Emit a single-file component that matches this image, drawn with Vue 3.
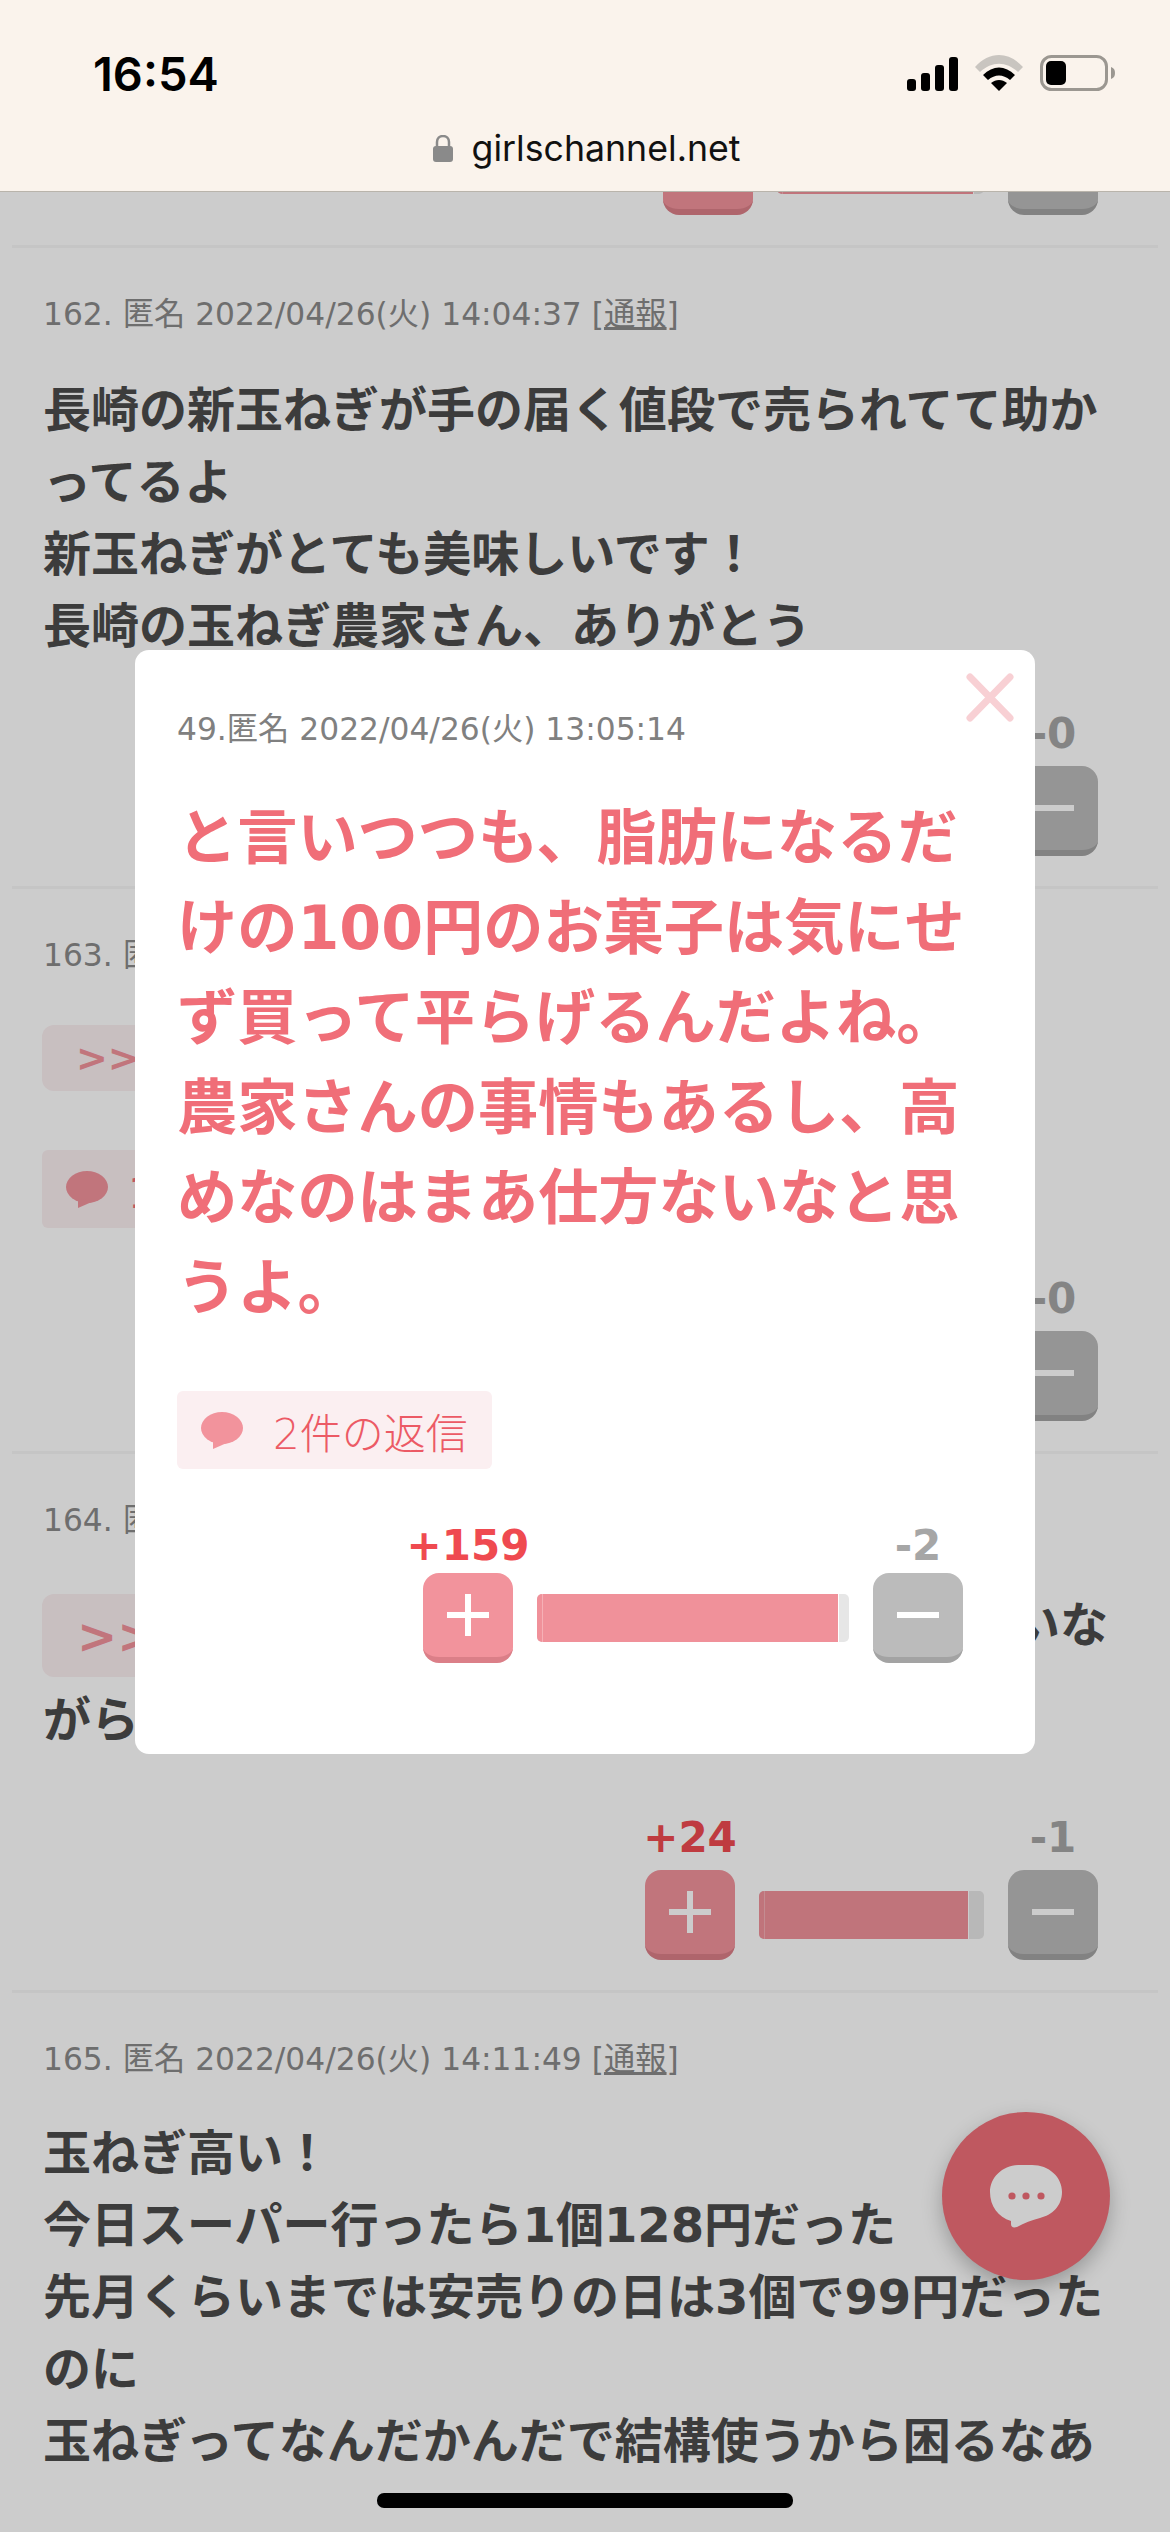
<script setup>
const posts = [
  {
    no: 162,
    time: '14:04:37',
    lines: ['長崎の新玉ねぎが手の届く値段で売られてて助か', 'ってるよ', '新玉ねぎがとても美味しいです！', '長崎の玉ねぎ農家さん、ありがとう'],
    plus: 12,
    minus: 0,
    fill: 100
  },
  {
    no: 163,
    time: '14:05:02',
    anchor: '>>49',
    replies: '1件の返信',
    lines: [],
    plus: 8,
    minus: 0,
    fill: 100
  },
  {
    no: 164,
    time: '14:08:21',
    bigAnchor: '>>49',
    leadText: 'いな',
    lines: ['がら'],
    plus: 24,
    minus: 1,
    fill: 93.5
  },
  {
    no: 165,
    time: '14:11:49',
    lines: ['玉ねぎ高い！', '今日スーパー行ったら1個128円だった', '先月くらいまでは安売りの日は3個で99円だった', 'のに', '玉ねぎってなんだかんだで結構使うから困るなあ'],
    tail: true
  }
]

const modalLines = [
  'と言いつつも、脂肪になるだ',
  'けの100円のお菓子は気にせ',
  'ず買って平らげるんだよね。',
  '農家さんの事情もあるし、高',
  'めなのはまあ仕方ないなと思',
  'うよ。'
]
</script>

<template>
  <div class="phone">
    <header class="topbar">
      <div class="status">
        <span class="clock">16:54</span>
        <div class="status-icons">
          <svg width="51" height="34" viewBox="0 0 51 34" fill="#000">
            <rect x="0" y="22" width="9" height="12" rx="3" />
            <rect x="14" y="16" width="9" height="18" rx="3" />
            <rect x="28" y="8" width="9" height="26" rx="3" />
            <rect x="42" y="0" width="9" height="34" rx="3" />
          </svg>
          <svg width="48" height="36" viewBox="0 0 48 36">
            <path d="M0 12C14-4 34-4 48 12L43 17C31 6 17 6 5 17Z" fill="#c9c5c0" />
            <path d="M8 20C18 10 30 10 40 20L35 25C28 19 20 19 13 25Z" fill="#000" />
            <path d="M16 28C21 24 27 24 32 28L24 36Z" fill="#000" />
          </svg>
          <svg width="75" height="36" viewBox="0 0 75 36">
            <rect x="1.5" y="1.5" width="65" height="33" rx="10" fill="none" stroke="#9b9791" stroke-width="3" />
            <rect x="6" y="6" width="20" height="24" rx="5" fill="#000" />
            <path d="M71 12C74 13 75 15 75 18C75 21 74 23 71 24Z" fill="#9b9791" />
          </svg>
        </div>
      </div>
      <div class="url">
        <svg width="20" height="27" viewBox="0 0 20 27">
          <path d="M4 12V7C4 3.500 6.500 1 10 1C13.500 1 16 3.500 16 7V12" fill="none" stroke="#8a8a8a" stroke-width="2.500" />
          <rect x="0" y="11" width="20" height="16" rx="3" fill="#8a8a8a" />
        </svg>
        <span>girlschannel.net</span>
      </div>
    </header>

    <main class="thread">
      <div class="votes votes-clipped">
        <div class="vote">
          <button class="btn btn-plus"></button>
        </div>
        <div class="bar"><div class="bar-fill" style="width: 95%"></div></div>
        <div class="vote">
          <button class="btn btn-minus"></button>
        </div>
      </div>

      <article v-for="post in posts" :key="post.no" class="post" :class="'post-' + post.no">
        <p class="meta">{{ post.no }}. 匿名 2022/04/26(火) {{ post.time }} [<u>通報</u>]</p>

        <template v-if="post.anchor">
          <div class="chip chip-anchor">{{ post.anchor }}</div>
          <div class="chip chip-reply">
            <svg width="42" height="37" viewBox="0 0 42 37" fill="#f2939c">
              <ellipse cx="21" cy="16" rx="21" ry="16" />
              <path d="M12 28V37L28 30Z" />
            </svg>
            {{ post.replies }}
          </div>
        </template>

        <div v-if="post.bigAnchor" class="lead">
          <span class="chip chip-big">{{ post.bigAnchor }}</span>
          <span>{{ post.leadText }}</span>
        </div>

        <div v-if="post.lines.length" class="body">
          <div v-for="line in post.lines" :key="line">{{ line }}</div>
        </div>

        <div v-if="!post.tail" class="votes">
          <div class="vote">
            <span class="count count-plus">+{{ post.plus }}</span>
            <button class="btn btn-plus">
              <svg width="42" height="42" viewBox="0 0 42 42" fill="#fff">
                <rect x="18" y="0" width="6" height="42" />
                <rect x="0" y="18" width="42" height="6" />
              </svg>
            </button>
          </div>
          <div class="bar"><div class="bar-fill" :style="{ width: post.fill + '%' }"></div></div>
          <div class="vote">
            <span class="count count-minus">-{{ post.minus }}</span>
            <button class="btn btn-minus">
              <svg width="42" height="42" viewBox="0 0 42 42" fill="#fff">
                <rect x="0" y="18" width="42" height="6" />
              </svg>
            </button>
          </div>
        </div>
      </article>

      <div class="fab">
        <svg width="72" height="63" viewBox="0 0 72 63">
          <path d="M30 0H42C59 0 72 12 72 27C72 41 62 50 50 53C42 55 34 58 27 62C23 63 21 62 21 59V56C8 52 0 41 0 27C0 12 13 0 30 0Z" fill="#fff" />
          <circle cx="22" cy="31" r="3.600" fill="#ef6e78" />
          <circle cx="36" cy="31" r="3.600" fill="#ef6e78" />
          <circle cx="51" cy="31" r="3.600" fill="#ef6e78" />
        </svg>
      </div>

      <div class="overlay"></div>
    </main>

    <section class="modal">
      <svg class="close" width="48" height="49" viewBox="0 0 48 49" fill="none" stroke="#f8d0d4" stroke-width="7" stroke-linecap="round">
        <path d="M4 4L44 45M44 4L4 45" />
      </svg>
      <p class="modal-meta">49.匿名 2022/04/26(火) 13:05:14</p>
      <div class="modal-text">
        <div v-for="line in modalLines" :key="line">{{ line }}</div>
      </div>
      <div class="modal-reply">
        <svg width="42" height="37" viewBox="0 0 42 37" fill="#f2939c">
          <ellipse cx="21" cy="16" rx="21" ry="16" />
          <path d="M12 28V37L28 30Z" />
        </svg>
        <span>2件の返信</span>
      </div>
      <div class="votes modal-votes">
        <div class="vote">
          <span class="count count-plus">+159</span>
          <button class="btn btn-plus">
            <svg width="42" height="42" viewBox="0 0 42 42" fill="#fff">
              <rect x="18" y="0" width="6" height="42" />
              <rect x="0" y="18" width="42" height="6" />
            </svg>
          </button>
        </div>
        <div class="bar"><div class="bar-fill" style="width: 96.800%"></div></div>
        <div class="vote">
          <span class="count count-minus">-2</span>
          <button class="btn btn-minus">
            <svg width="42" height="42" viewBox="0 0 42 42" fill="#fff">
              <rect x="0" y="18" width="42" height="6" />
            </svg>
          </button>
        </div>
      </div>
    </section>

    <div class="home-bar"></div>
  </div>
</template>

<style scoped>
.phone {
  position: relative;
  width: 1170px;
  height: 2532px;
  overflow: hidden;
  background: #fff;
  font-family: "DejaVu Sans", "Noto Sans CJK JP", sans-serif;
  color: #4b4b4b;
}
p {
  margin: 0;
}

.topbar {
  position: relative;
  z-index: 3;
  box-sizing: border-box;
  height: 192px;
  background: #faf3ec;
  border-bottom: 1px solid #b9b4ab;
  font-family: Inter, "Liberation Sans", sans-serif;
  color: #000;
}
.status {
  display: flex;
  justify-content: space-between;
  align-items: flex-start;
  padding: 48px 55px 0 93px;
}
.clock {
  font-size: 47px;
  line-height: 52px;
  font-weight: 600;
}
.status-icons {
  display: flex;
  align-items: flex-end;
  gap: 17px;
  margin-top: 7px;
}
.url {
  display: flex;
  justify-content: center;
  align-items: center;
  gap: 19px;
  margin-top: 26px;
  padding-left: 3px;
  font-size: 35.700px;
  line-height: 44px;
  color: #111;
}

.thread {
  position: relative;
  display: flow-root;
  height: 2340px;
}
.votes {
  display: flex;
  justify-content: flex-end;
  align-items: flex-end;
  gap: 24px;
  padding-right: 60px;
  margin-top: 47px;
}
.votes-clipped {
  margin-top: -67px;
  padding: 0 72px 30px 0;
}
.votes-clipped .bar {
  width: 207px;
}
.vote {
  display: flex;
  flex-direction: column;
  align-items: center;
  width: 90px;
}
.count {
  font-size: 42px;
  line-height: 50px;
  margin-bottom: 7px;
  font-weight: 700;
  white-space: nowrap;
}
.count-plus {
  color: #ef4a50;
}
.count-minus {
  color: #a6a6a6;
}
.btn {
  display: flex;
  justify-content: center;
  align-items: center;
  box-sizing: border-box;
  width: 90px;
  height: 90px;
  padding: 0;
  border: 0;
  border-bottom: 6px solid;
  border-radius: 16px;
}
.btn-plus {
  background: #f2939c;
  border-color: #db7f88;
}
.btn-minus {
  background: #bbb;
  border-color: #a3a3a3;
}
.bar {
  width: 225px;
  height: 48px;
  margin-bottom: 21px;
  border-radius: 5px;
  background: #e6e6e6;
  overflow: hidden;
}
.bar-fill {
  position: relative;
  box-sizing: border-box;
  height: 100%;
  background: #f0919a;
  border-right: 1px solid #fff;
}
.bar-fill::before {
  content: "";
  position: absolute;
  left: 5px;
  top: 0;
  bottom: 0;
  width: 1px;
  background: #f6b0b6;
}

.post {
  margin: 0 12px;
  padding: 44px 0 30px;
  border-top: 3px solid #f7f7f7;
}
.post-165 {
  padding-bottom: 0;
}
.meta {
  margin-left: 31px;
  font-size: 31.300px;
  line-height: 44px;
  color: #8a8a8a;
  white-space: nowrap;
}
.body {
  margin: 38px 0 0 31px;
  font-size: 48px;
  line-height: 72px;
  font-weight: 700;
  white-space: nowrap;
}
.post-165 .body {
  margin-top: 36px;
}
.chip {
  display: flex;
  align-items: center;
  box-sizing: border-box;
  width: 360px;
  margin-left: 30px;
  background: #fbeff1;
  border-radius: 12px;
  color: #f2939c;
  font-weight: 700;
}
.chip-anchor {
  height: 66px;
  margin-top: 48px;
  padding-left: 34px;
  font-size: 38px;
}
.chip-reply {
  gap: 20px;
  height: 78px;
  margin-top: 59px;
  padding-left: 24px;
  font-size: 42px;
  font-weight: 400;
  color: #f06e78;
  border-radius: 6px;
}
.post-163 .votes {
  margin-top: 46px;
}
.lead {
  display: flex;
  justify-content: space-between;
  margin: 52px 50px 0 0;
  height: 90px;
  font-size: 48px;
  line-height: 62px;
  font-weight: 700;
  white-space: nowrap;
}
.chip-big {
  height: 83px;
  padding-left: 35px;
  font-size: 48px;
}
.post-164 .body {
  margin-top: 0;
}
.post-164 .votes {
  margin-top: 57px;
}

.fab {
  position: absolute;
  left: 942px;
  top: 1920px;
  display: flex;
  justify-content: center;
  align-items: center;
  width: 168px;
  height: 168px;
  border-radius: 50%;
  background: #ef6e78;
  box-shadow: 0 8px 20px rgba(0, 0, 0, 0.25);
}
.overlay {
  position: absolute;
  inset: 0;
  background: rgba(0, 0, 0, 0.2);
}

.modal {
  position: absolute;
  z-index: 2;
  left: 135px;
  top: 650px;
  box-sizing: border-box;
  width: 900px;
  height: 1104px;
  padding: 57px 0 0 42px;
  background: #fff;
  border-radius: 14px;
}
.close {
  position: absolute;
  top: 23px;
  right: 21px;
}
.modal-meta {
  font-size: 31.300px;
  line-height: 44px;
  color: #808080;
  white-space: nowrap;
}
.modal-text {
  margin-top: 42px;
  font-size: 60.200px;
  line-height: 90px;
  font-weight: 700;
  color: #f06e78;
  white-space: nowrap;
}
.modal-reply {
  display: inline-flex;
  align-items: center;
  gap: 30px;
  box-sizing: border-box;
  height: 78px;
  margin-top: 58px;
  padding: 0 24px;
  background: #fbeff1;
  border-radius: 6px;
  font-size: 42px;
  font-weight: 300;
  color: #ec5a65;
}
.modal-votes {
  margin-top: 52px;
  padding-right: 72px;
}
.modal-votes .bar {
  width: 312px;
}
.modal-votes .count {
  margin-bottom: 2px;
}

.home-bar {
  position: absolute;
  z-index: 3;
  left: 377px;
  top: 2493px;
  width: 416px;
  height: 15px;
  border-radius: 7px;
  background: #000;
}
</style>
